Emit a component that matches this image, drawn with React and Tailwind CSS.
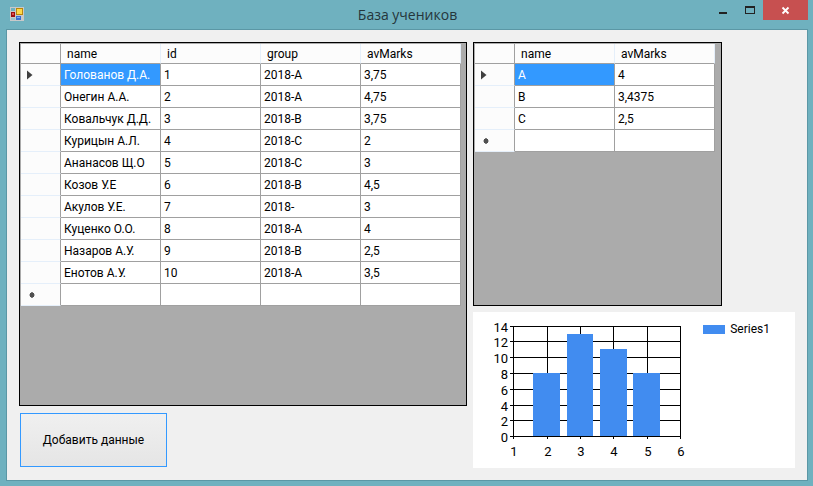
const students = [
  ['Голованов Д.А.', '1', '2018-A', '3,75'],
  ['Онегин А.А.', '2', '2018-A', '4,75'],
  ['Ковальчук Д.Д.', '3', '2018-B', '3,75'],
  ['Курицын А.Л.', '4', '2018-C', '2'],
  ['Ананасов Щ.О', '5', '2018-C', '3'],
  ['Козов У.Е', '6', '2018-B', '4,5'],
  ['Акулов У.Е.', '7', '2018-', '3'],
  ['Куценко О.О.', '8', '2018-A', '4'],
  ['Назаров А.У.', '9', '2018-B', '2,5'],
  ['Енотов А.У.', '10', '2018-A', '3,5'],
];

const groups = [
  ['A', '4'],
  ['B', '3,4375'],
  ['C', '2,5'],
];

function DataGrid({ label, columns, rows, className }) {
  const lines = [...rows, columns.map(() => '')];
  return (
    <div className={`border border-black bg-[#ababab] p-px ${className}`}>
      <table
        aria-label={label}
        className="table-fixed border-separate border-spacing-0 bg-white text-left text-[12px] leading-[14px]"
      >
        <colgroup>
          <col className="w-[40px]" />
          {columns.map((c) => (
            <col key={c} className="w-[100px]" />
          ))}
        </colgroup>
        <thead>
          <tr className="h-[20px] bg-[#fcfcfc]">
            <td className="border-r border-b border-[#a0a0a0] p-0" />
            {columns.map((c) => (
              <th
                key={c}
                scope="col"
                className="border-r border-b border-r-[#e5effa] border-b-[#a0a0a0] p-0 pl-[6px] font-normal"
              >
                {c}
              </th>
            ))}
          </tr>
        </thead>
        <tbody>
          {lines.map((row, r) => (
            <tr key={r} className="h-[22px]">
              <td className="border-r border-b border-r-[#a0a0a0] border-b-[#e5effa] bg-[#fcfcfc] p-0 pl-[6px]">
                {r === 0 && (
                  <svg className="block h-[10px] w-[6px] fill-[#404040]" viewBox="0 0 6 10" aria-hidden="true">
                    <path d="M0 0.5L5.5 5L0 9.5Z" />
                  </svg>
                )}
                {r === lines.length - 1 && (
                  <svg className="block h-[9px] w-[9px] fill-[#505050]" viewBox="0 0 9 9" aria-hidden="true">
                    <path d="M3 3l1 0 .5-1h1l.5 1 1 0v1l.5.5v1l-.5.5v1H6l-.5 1h-1L4 7H3V6l-.5-.5v-1L3 4z" />
                  </svg>
                )}
              </td>
              {row.map((v, c) => (
                <td
                  key={c}
                  className={`border-r border-b border-[#a0a0a0] p-0 pl-[3px] whitespace-nowrap ${
                    r === 0 && c === 0 ? 'bg-[#3399ff] text-white' : ''
                  }`}
                >
                  {v}
                </td>
              ))}
            </tr>
          ))}
        </tbody>
      </table>
    </div>
  );
}

const xTicks = [
  [1, 40],
  [2, 74],
  [3, 107],
  [4, 140],
  [5, 174],
  [6, 207],
];
const yTicks = [
  [14, 14],
  [12, 29],
  [10, 45],
  [8, 61],
  [6, 77],
  [4, 93],
  [2, 108],
  [0, 124],
];
const bars = [
  [60, 61, 27],
  [94, 22, 26],
  [127, 37, 27],
  [160, 61, 27],
];

function Chart() {
  return (
    <div className="flex h-[156px] justify-between bg-white">
      <svg className="h-[156px] w-[220px] shrink-0 text-[13px]" viewBox="0 0 220 156" role="img" aria-label="Series1">
        <g shapeRendering="crispEdges">
          {yTicks.map(([v, y]) => (
            <rect key={v} x="37" y={y} width="171" height="1" />
          ))}
          {xTicks.map(([v, x]) => (
            <rect key={v} x={x} y="14" width="1" height="113" />
          ))}
          {bars.map(([x, y, w]) => (
            <rect key={x} x={x} y={y} width={w} height={124 - y} fill="#418cf0" />
          ))}
        </g>
        {yTicks.map(([v, y]) => (
          <text key={v} x="35" y={y + 6} textAnchor="end">
            {v}
          </text>
        ))}
        {xTicks.map(([v, x]) => (
          <text key={v} x={x + 1} y="144" textAnchor="middle">
            {v}
          </text>
        ))}
      </svg>
      <div className="mt-[10px] flex h-[14px] items-center gap-[5px] pr-[25px] text-[12px]">
        <span className="h-[9px] w-[22px] bg-[#418cf0]" />
        <span>Series1</span>
      </div>
    </div>
  );
}

function TitleBar() {
  return (
    <header className="flex h-[29px] items-start pl-[4px]">
      <svg className="mt-[7px] h-[14px] w-[14px]" viewBox="0 0 14 14" aria-hidden="true">
        <rect width="14" height="14" fill="#c9c9c9" />
        <rect x="1" y="1" width="4" height="3" fill="#6fb1bf" />
        <rect x="1" y="11" width="4" height="2" fill="#9cc3cb" />
        <rect x="6" y="1" width="7" height="7" fill="#b8860b" />
        <rect x="7" y="2" width="5" height="5" fill="#ffd84a" />
        <rect x="1" y="5" width="4" height="5" fill="#9c1010" />
        <rect x="2" y="6" width="2" height="2" fill="#e05050" />
        <rect x="6" y="9" width="5" height="4" fill="#3a6fd0" />
        <rect x="7" y="10" width="3" height="1" fill="#80b0f0" />
      </svg>
      <h1 className="flex-1 pt-[5px] pl-[80px] text-center font-['Open_Sans','Noto_Sans',sans-serif] text-[14px] leading-[20px] text-[#25363b]">
        База учеников
      </h1>
      <button aria-label="Minimize" className="h-[20px] w-[26px]">
        <svg className="h-[20px] w-[26px]" viewBox="0 0 26 20" aria-hidden="true">
          <rect x="8" y="12" width="8" height="2" fill="#222" />
        </svg>
      </button>
      <button aria-label="Maximize" className="h-[20px] w-[26px]">
        <svg className="h-[20px] w-[26px]" viewBox="0 0 26 20" aria-hidden="true">
          <path d="M8 6h10v8H8zM9 8v5h8V8z" fillRule="evenodd" fill="#222" />
        </svg>
      </button>
      <button aria-label="Close" className="h-[20px] w-[45px] bg-[#c75050]">
        <svg className="h-[20px] w-[45px]" viewBox="0 0 45 20" aria-hidden="true">
          <path d="M19.500 7.500l6 6m0-6l-6 6" stroke="#fff" strokeWidth="1.800" />
        </svg>
      </button>
    </header>
  );
}

export default function App() {
  return (
    <div className="flex min-h-screen flex-col bg-[#6fb1bf] pr-[5px] pb-[5px] pl-[6px] font-[Roboto,'Liberation_Sans',sans-serif] text-black">
      <TitleBar />
      <main className="grid flex-1 grid-cols-[448fr_322fr] gap-[6px] border border-[#5b97a5] bg-[#f0f0f0] p-[12px]">
        <section className="flex flex-col items-start gap-[7px]">
          <DataGrid
            label="Ученики"
            columns={['name', 'id', 'group', 'avMarks']}
            rows={students}
            className="w-full flex-1"
          />
          <button className="mb-px ml-px h-[54px] w-[147px] border border-[#3399ff] bg-linear-to-b from-[#f0f0f0] to-[#e5e5e5] text-[12px]">
            Добавить данные
          </button>
        </section>
        <section className="flex flex-col gap-[6px]">
          <DataGrid
            label="Группы"
            columns={['name', 'avMarks']}
            rows={groups}
            className="flex-1 self-start pr-[6px]"
          />
          <Chart />
        </section>
      </main>
    </div>
  );
}
